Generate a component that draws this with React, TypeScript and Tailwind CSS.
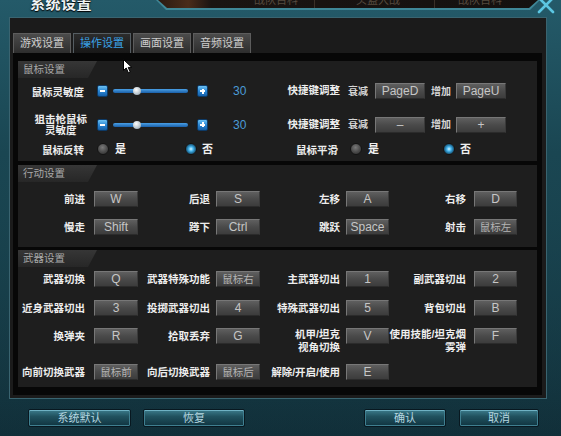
import React from "react";

type Item = { label: string | string[]; value: string; cjk?: boolean };

const LABEL_W = ["w-[76px]", "w-[78px]", "w-[86px]", "w-[85px]"];
const LABEL_PR = ["pr-[9px]", "pr-[6px]", "pr-[6px]", "pr-[8px]"];
const KEY_W = ["w-[44px]", "w-[44px]", "w-[43px]", "w-[43px]"];

function KeyBox({ value, cjk, w }: { value: string; cjk?: boolean; w: string }) {
  return (
    <div
      className={`${w} h-[16px] shrink-0 flex items-center justify-center border border-[#777777] border-b-[#2b2b2b] border-r-[#3a3a3a] bg-[linear-gradient(180deg,#5f5f5f_0%,#4a4a4a_50%,#3c3c3c_100%)] leading-none ${
        cjk ? "text-[10.5px] text-[#b4b4b4]" : "text-[12px] text-[#c6c6c6]"
      }`}
    >
      {value}
    </div>
  );
}

function Label({ text }: { text: string | string[] }) {
  if (Array.isArray(text)) {
    return (
      <div className="flex flex-col items-end text-[10.5px] font-bold text-[#ededed] leading-[13px] whitespace-nowrap">
        {text.map((t) => (
          <span key={t}>{t}</span>
        ))}
      </div>
    );
  }
  return (
    <span className="text-[10.5px] font-bold text-[#ededed] leading-[16px] whitespace-nowrap">{text}</span>
  );
}

function KeyRow({ items, className }: { items: Item[]; className: string }) {
  return (
    <div className={`flex items-start h-[16px] ${className}`}>
      {items.map((it, i) => (
        <React.Fragment key={i}>
          <div className={`${LABEL_W[i]} ${LABEL_PR[i]} shrink-0 flex justify-end items-start h-[16px]`}>
            <Label text={it.label} />
          </div>
          <KeyBox value={it.value} cjk={it.cjk} w={KEY_W[i]} />
        </React.Fragment>
      ))}
    </div>
  );
}

function Section({
  title,
  className,
  children,
}: {
  title: string;
  className: string;
  children: React.ReactNode;
}) {
  return (
    <div className={`w-[519px] shrink-0 bg-[#1e1e1e] ${className}`}>
      <div className="w-[79px] h-[17px] bg-[linear-gradient(180deg,#363636,#272727)] [clip-path:polygon(0_0,100%_0,calc(100%_-_9px)_100%,0_100%)] pl-[5px] text-[10.5px] leading-[17px] text-[#a8a8a8]">
        {title}
      </div>
      {children}
    </div>
  );
}

function StepButton({ plus, className = "" }: { plus?: boolean; className?: string }) {
  return (
    <div
      className={`relative w-[11px] h-[12px] shrink-0 rounded-[2px] border border-[#0d3a66] bg-[linear-gradient(180deg,#6cc2f4_0%,#2a86d4_50%,#1660a8_100%)] flex items-center justify-center ${className}`}
    >
      <div className="w-[5px] h-[2px] bg-white" />
      {plus && <div className="absolute w-[2px] h-[5px] bg-white" />}
    </div>
  );
}

function Slider() {
  return (
    <div className="flex items-center">
      <StepButton />
      <div className="relative ml-[5px] w-[75px] h-[4px] rounded-full bg-[linear-gradient(180deg,#4aa0e6,#1a5fa8)]">
        <div className="absolute left-[20px] top-[-2px] w-[8px] h-[8px] rounded-full bg-[radial-gradient(circle_at_40%_35%,#ffffff,#b8c4cc_60%,#7a8690)]" />
      </div>
      <StepButton plus className="ml-[9px]" />
      <span className="ml-[25px] text-[12px] text-[#4b9bd6]">30</span>
    </div>
  );
}

function Radio({ on }: { on?: boolean }) {
  return (
    <div
      className={`w-[12px] h-[12px] shrink-0 rounded-full border border-[#151515] ${
        on
          ? "bg-[radial-gradient(circle,#d8f6ff_0%,#49b8f0_30%,#1f6d98_60%,#3a4a52_100%)]"
          : "bg-[radial-gradient(circle_at_45%_35%,#7a7a7a,#4a4a4a_55%,#2c2c2c)]"
      }`}
    />
  );
}

function RadioPair({ gap }: { gap: string }) {
  return (
    <div className="flex items-center">
      <div className={`flex items-center ${gap}`}>
        <Radio />
        <span className="ml-[6px] text-[11px] font-bold text-[#f0f0f0]">是</span>
      </div>
      <div className="flex items-center">
        <Radio on />
        <span className="ml-[5px] text-[11px] font-bold text-[#f0f0f0]">否</span>
      </div>
    </div>
  );
}

function HotkeyAdjust({ down, up }: { down: string; up: string }) {
  return (
    <div className="flex items-center">
      <div className="w-[60px] text-right text-[10.5px] font-bold text-[#ededed] whitespace-nowrap">快捷键调整</div>
      <span className="ml-[8px] text-[10px] font-bold text-[#d6d6d6]">衰减</span>
      <div className="ml-[7px]">
        <KeyBox value={down} w="w-[50px]" />
      </div>
      <span className="ml-[6px] text-[10px] font-bold text-[#d6d6d6]">增加</span>
      <div className="ml-[5px]">
        <KeyBox value={up} w="w-[50px]" />
      </div>
    </div>
  );
}

function BottomButton({ text, w, className }: { text: string; w: string; className: string }) {
  return (
    <div
      className={`${w} ${className} h-[18px] rounded-[2px] border border-[#081820] shadow-[inset_0_1px_0_#6fb2c4,inset_0_0_0_1px_#3f7f90] bg-[linear-gradient(180deg,#3c7c8c_0%,#21525f_40%,#103440_100%)] flex items-center justify-center text-[11px] text-[#b5d7e0]`}
    >
      {text}
    </div>
  );
}

function TopBar() {
  return (
    <div className="relative h-[17px] shrink-0">
      {/* banner strip along the top edge */}
      <div className="absolute left-[156px] top-0 w-[384px] h-[10px] bg-[#3f8797] [clip-path:polygon(0_0,100%_0,calc(100%_-_10px)_100%,10px_100%)]">
        <div className="absolute left-[2px] top-0 w-[380px] h-[8px] bg-[linear-gradient(90deg,#2a1a12_0%,#4a2c1a_8%,#1a1412_14%,#14110f_100%)] [clip-path:polygon(0_0,100%_0,calc(100%_-_9px)_100%,9px_100%)] overflow-hidden">
          <span className="absolute left-[96px] top-[-8px] text-[11px] text-[#564a3e]">战队百科</span>
          <span className="absolute left-[198px] top-[-8px] text-[11px] text-[#564a3e]">头盔大战</span>
          <span className="absolute left-[300px] top-[-8px] text-[11px] text-[#564a3e]">战队百科</span>
          <div className="absolute left-[156px] top-0 w-px h-[8px] bg-[#3a3028]" />
          <div className="absolute left-[276px] top-0 w-px h-[8px] bg-[#3a3028]" />
        </div>
      </div>
      <div className="absolute left-[30px] top-[-7px] text-[15px] font-bold text-[#eef2f3] [text-shadow:0_1px_1px_#000,0_0_2px_#0a2028] tracking-[0.5px]">
        系统设置
      </div>
      <svg className="absolute left-[536px] top-[-3px]" width="20" height="17" viewBox="0 0 20 17">
        <path d="M3 1 L17 15 M17 1 L3 15" stroke="#5cc6e2" strokeWidth="2.6" strokeLinecap="round" />
      </svg>
    </div>
  );
}

export default function App() {
  return (
    <div className="relative w-[561px] h-[436px] overflow-hidden flex flex-col bg-[linear-gradient(180deg,#245a69_0%,#1a4652_35%,#15394404_100%),linear-gradient(180deg,#1a4450,#112f39)] font-['Liberation_Sans','Noto_Sans_CJK_SC',sans-serif]">
      <TopBar />

      <div className="ml-[9px] w-[538px] h-[382px] shrink-0 bg-[#1b1b1b] border border-[#3a6470] flex flex-col">
        {/* tabs */}
        <div className="flex gap-[2px] pl-[3px] pt-[15px]">
          {["游戏设置", "操作设置", "画面设置", "音频设置"].map((t, i) =>
            i === 1 ? (
              <div
                key={t}
                className="w-[58px] h-[20px] flex items-center justify-center border border-[#555d62] border-b-0 bg-[linear-gradient(180deg,#2c2c2c,#181818)] text-[11px] text-[#3aa2e8]"
              >
                {t}
              </div>
            ) : (
              <div
                key={t}
                className="w-[58px] h-[20px] flex items-center justify-center border border-[#5c5c5c] border-b-0 bg-[linear-gradient(180deg,#4b4b4b,#2d2d2d)] text-[11px] text-[#cdcdcd]"
              >
                {t}
              </div>
            )
          )}
        </div>

        {/* settings body */}
        <div className="ml-[3px] w-[529px] h-[342px] bg-[#070707] pt-[8px] pl-[5px] flex flex-col">
          <Section title="鼠标设置" className="h-[100px]">
            <div className="flex items-center h-[16px] mt-[5px]">
              <div className="w-[262px] flex items-center">
                <div className="w-[66px] text-right">
                  <Label text="鼠标灵敏度" />
                </div>
                <div className="ml-[13px]">
                  <Slider />
                </div>
              </div>
              <HotkeyAdjust down="PageD" up="PageU" />
            </div>

            <div className="flex items-center h-[17px] mt-[17px]">
              <div className="w-[262px] flex items-center">
                <div className="w-[66px] flex justify-end">
                  <div className="-mr-[3px] flex flex-col items-center text-[10.5px] font-bold text-[#ededed] leading-[11px] whitespace-nowrap">
                    <span>狙击枪鼠标</span>
                    <span>灵敏度</span>
                  </div>
                </div>
                <div className="ml-[13px]">
                  <Slider />
                </div>
              </div>
              <HotkeyAdjust down="–" up="+" />
            </div>

            <div className="flex items-center h-[12px] mt-[10px]">
              <div className="w-[262px] flex items-center">
                <div className="w-[66px] text-right">
                  <Label text="鼠标反转" />
                </div>
                <div className="ml-[13px]">
                  <RadioPair gap="w-[88px]" />
                </div>
              </div>
              <div className="w-[58px] text-right">
                <Label text="鼠标平滑" />
              </div>
              <div className="ml-[12px]">
                <RadioPair gap="w-[93px]" />
              </div>
            </div>
          </Section>

          <Section title="行动设置" className="h-[82px] mt-[4px]">
            <KeyRow
              className="mt-[9px]"
              items={[
                { label: "前进", value: "W" },
                { label: "后退", value: "S" },
                { label: "左移", value: "A" },
                { label: "右移", value: "D" },
              ]}
            />
            <KeyRow
              className="mt-[12px]"
              items={[
                { label: "慢走", value: "Shift" },
                { label: "蹲下", value: "Ctrl" },
                { label: "跳跃", value: "Space" },
                { label: "射击", value: "鼠标左", cjk: true },
              ]}
            />
          </Section>

          <Section title="武器设置" className="h-[137px] mt-[3px]">
            <KeyRow
              className="mt-[4px]"
              items={[
                { label: "武器切换", value: "Q" },
                { label: "武器特殊功能", value: "鼠标右", cjk: true },
                { label: "主武器切出", value: "1" },
                { label: "副武器切出", value: "2" },
              ]}
            />
            <KeyRow
              className="mt-[13px]"
              items={[
                { label: "近身武器切出", value: "3" },
                { label: "投掷武器切出", value: "4" },
                { label: "特殊武器切出", value: "5" },
                { label: "背包切出", value: "B" },
              ]}
            />
            <KeyRow
              className="mt-[12px]"
              items={[
                { label: "换弹夹", value: "R" },
                { label: "拾取丢弃", value: "G" },
                { label: ["机甲/坦克", "视角切换"], value: "V" },
                { label: ["使用技能/坦克烟", "雾弹"], value: "F" },
              ]}
            />
            <KeyRow
              className="mt-[20px]"
              items={[
                { label: "向前切换武器", value: "鼠标前", cjk: true },
                { label: "向后切换武器", value: "鼠标后", cjk: true },
                { label: "解除/开启/使用", value: "E" },
              ]}
            />
          </Section>
        </div>
      </div>

      {/* footer buttons */}
      <div className="flex items-start pt-[10px]">
        <BottomButton text="系统默认" w="w-[103px]" className="ml-[28px]" />
        <BottomButton text="恢复" w="w-[102px]" className="ml-[12px]" />
        <BottomButton text="确认" w="w-[82px]" className="ml-[119px]" />
        <BottomButton text="取消" w="w-[80px]" className="ml-[13px]" />
      </div>

      {/* mouse pointer */}
      <svg className="absolute left-[123px] top-[59px]" width="10" height="15" viewBox="0 0 10 15">
        <path d="M0.5 0.5 L0.5 11.5 L3.2 9 L5.4 13.8 L7.3 13 L5.2 8.4 L8.8 8.4 Z" fill="#ffffff" stroke="#000000" strokeWidth="1" strokeLinejoin="round" />
      </svg>
    </div>
  );
}
